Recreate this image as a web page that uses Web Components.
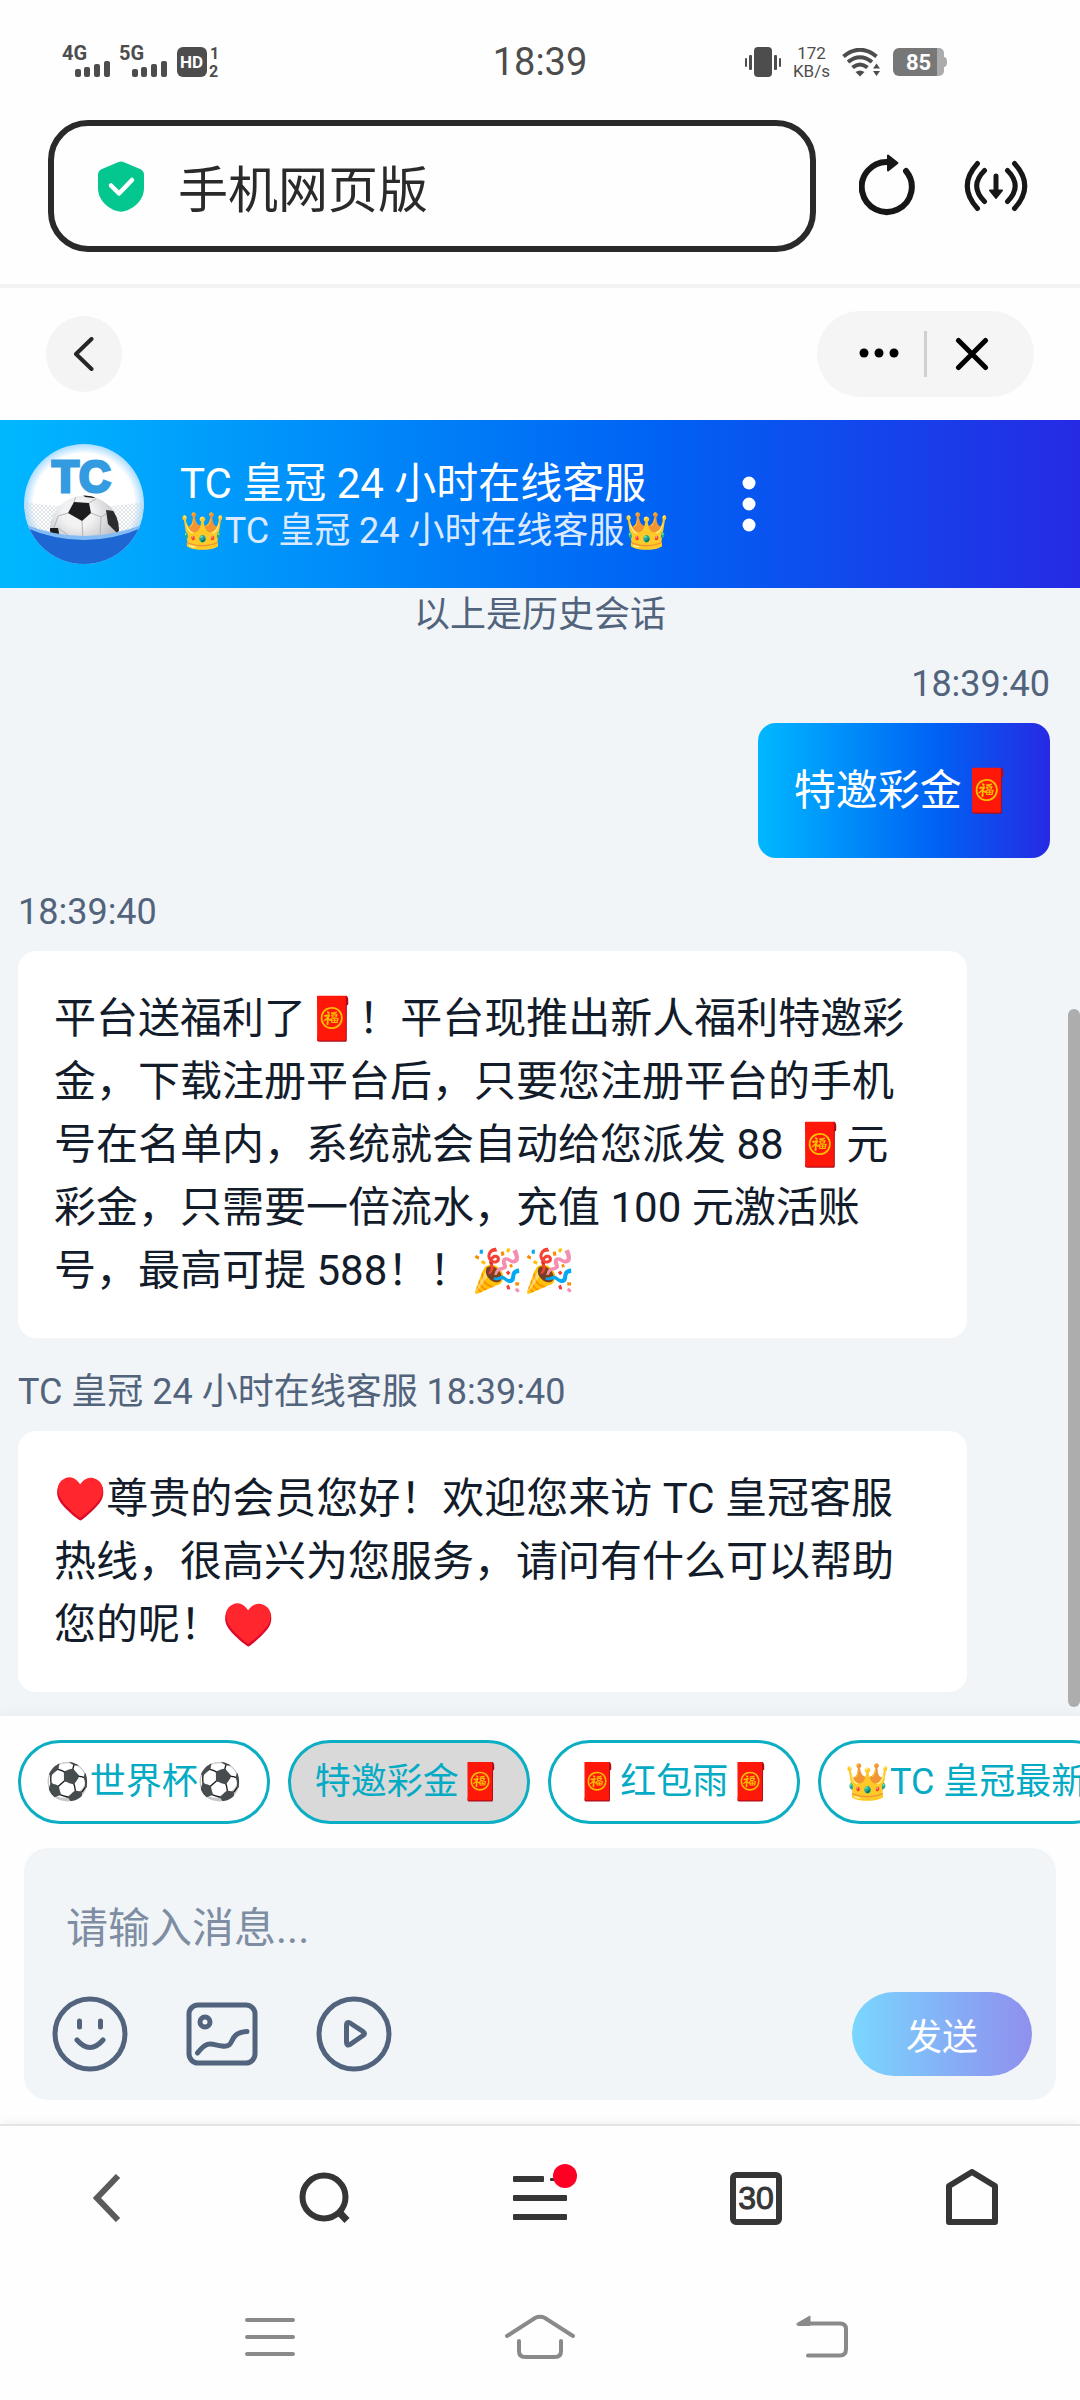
<!DOCTYPE html>
<html lang="zh-CN">
<head>
<meta charset="utf-8">
<meta name="viewport" content="width=device-width, initial-scale=1">
<title>TC 皇冠 24 小时在线客服</title>
<style>
  html { background: #fefefe; }
  body {
    margin: 0;
    font-family: Roboto, "Noto Sans CJK SC", "Noto Color Emoji", sans-serif;
    color: #131c2b;
    --brand: linear-gradient(90deg, #00b8ff 0%, #0062f4 61%, #262ae4 100%);
    --slate: #52637c;
    --panel: #f1f5f8;
  }
</style>
</head>
<body>
<chat-page>
  <status-bar></status-bar>
  <browser-bar></browser-bar>
  <site-toolbar></site-toolbar>
  <chat-header>
    <span slot="title">TC 皇冠 24 小时在线客服</span>
    <span slot="subtitle">👑TC 皇冠 24 小时在线客服👑</span>
  </chat-header>
  <chat-feed>
    <feed-note>以上是历史会话</feed-note>
    <chat-message own><span slot="meta">18:39:40</span>特邀彩金🧧</chat-message>
    <chat-message><span slot="meta">18:39:40</span>平台送福利了🧧！平台现推出新人福利特邀彩金，下载注册平台后，只要您注册平台的手机号在名单内，系统就会自动给您派发 88 🧧元彩金，只需要一倍流水，充值 100 元激活账号，最高可提 588！！🎉🎉</chat-message>
    <chat-message><span slot="meta">TC 皇冠 24 小时在线客服 18:39:40</span>♥️尊贵的会员您好！欢迎您来访 TC 皇冠客服热线，很高兴为您服务，请问有什么可以帮助您的呢！♥️</chat-message>
  </chat-feed>
  <chat-composer>
    <quick-reply slot="replies">⚽️世界杯⚽️</quick-reply>
    <quick-reply slot="replies" selected>特邀彩金🧧</quick-reply>
    <quick-reply slot="replies">🧧红包雨🧧</quick-reply>
    <quick-reply slot="replies">👑TC 皇冠最新</quick-reply>
  </chat-composer>
  <browser-nav></browser-nav>
  <system-nav></system-nav>
</chat-page>

<script>
const base = `
  *, *::before, *::after { box-sizing: border-box; }
  button { font: inherit; color: inherit; background: none; border: 0; padding: 0; margin: 0; display: flex; align-items: center; justify-content: center; }
  svg { display: block; flex: none; }
`;
function element(tag, css, html) {
  customElements.define(tag, class extends HTMLElement {
    constructor() {
      super();
      this.attachShadow({ mode: "open" }).innerHTML = `<style>${base}${css}</style>${html}`;
    }
  });
}

element("chat-page", `
  :host { display: flex; flex-direction: column; min-height: 100vh; overflow-x: hidden; }
`, `<slot></slot>`);

element("status-bar", `
  :host { display: grid; grid-template-columns: 1fr auto 1fr; align-items: center; padding: 40px 0 36px; color: #4d4d4d; }
  .side { display: flex; align-items: center; gap: 7px; }
  .left { padding-left: 62px; }
  .right { padding-right: 132px; justify-content: flex-end; gap: 12px; }
  time { font-size: 38px; line-height: 44px; }
  .rate { display: flex; flex-direction: column; align-items: center; font-size: 17px; line-height: 18px; }
  svg text { font-weight: 700; }
`, `
  <div class="side left">
    <svg width="50" height="44" viewBox="0 -6 50 44" fill="#4d4d4d"><text x="0" y="14" font-size="20">4G</text>
      <rect x="13" y="23" width="6" height="8" rx="2"/><rect x="22" y="21" width="6" height="10" rx="2"/><rect x="32" y="18" width="6" height="13" rx="2"/><rect x="42" y="15" width="6" height="16" rx="2"/></svg>
    <svg width="50" height="44" viewBox="0 -6 50 44" fill="#4d4d4d"><text x="0" y="14" font-size="20">5G</text>
      <rect x="13" y="23" width="6" height="8" rx="2"/><rect x="22" y="21" width="6" height="10" rx="2"/><rect x="32" y="18" width="6" height="13" rx="2"/><rect x="42" y="15" width="6" height="16" rx="2"/></svg>
    <svg width="48" height="44" viewBox="0 -6 48 44" fill="#4d4d4d"><rect x="1" y="1" width="30" height="30" rx="6"/>
      <text x="4" y="22" font-size="17" fill="#fff">HD</text>
      <text x="34" y="13" font-size="16">1</text><text x="33" y="31" font-size="16">2</text></svg>
  </div>
  <time>18:39</time>
  <div class="side right">
    <svg width="36" height="30" viewBox="0 0 36 30" fill="#4d4d4d"><rect x="9" width="18" height="30" rx="4"/>
      <rect x="0" y="11" width="2" height="9" rx="1"/><rect x="4" y="8" width="3" height="15" rx="1"/><rect x="29" y="8" width="3" height="15" rx="1"/><rect x="34" y="11" width="2" height="9" rx="1"/></svg>
    <div class="rate"><span>172</span><span>KB/s</span></div>
    <svg width="39" height="29" viewBox="0 0 39 29" fill="none" stroke="#4d4d4d" stroke-width="4">
      <path d="M1.500 8.500Q18 -5 34.500 8.500M6 14Q18 4.500 30 14M10.500 19.500Q18 13.500 25.500 19.500"/>
      <path d="M13.500 24Q18 21 22.500 24L18 28.500Z" fill="#4d4d4d" stroke="none"/>
      <path d="M31 20.500L34.500 15.500L38 20.500ZM31 23L34.500 28L38 23Z" fill="#4d4d4d" stroke="none"/></svg>
    <svg width="55" height="28" viewBox="0 0 55 28"><path d="M44 0h2a5 5 0 0 1 5 5v4q3 0 3 5t-3 5v4a5 5 0 0 1-5 5h-2Z" fill="#ababab"/><path d="M6 0H44V28H6a6 6 0 0 1-6-6V6a6 6 0 0 1 6-6Z" fill="#777"/>
      <text x="13" y="22" font-size="22" fill="#fff">85</text></svg>
  </div>
`);

element("browser-bar", `
  :host { display: flex; align-items: center; padding: 0 48px 32px; border-bottom: 4px solid #f3f3f3; }
  label { flex: 1; min-width: 0; display: flex; align-items: center; gap: 34px; border: 6px solid #2a2a2a; border-radius: 40px; padding: 24px 42px 24px 44px; }
  input { flex: 1; min-width: 0; border: 0; padding: 0; outline: 0; background: none; font-family: "Noto Sans CJK SC", sans-serif; font-size: 50px; line-height: 72px; height: 72px; color: #2a2a2a; }
  .reload { margin-left: 43px; }
  .save { margin-left: 47px; margin-right: 4px; }
`, `
  <label>
    <svg width="46" height="51" viewBox="0 0 46 51"><path d="M20 1.200Q23 -.4 26 1.200L42 8Q46 10 46 13.500V27C46 39 36 48 26 50.300Q23 51.200 20 50.300C10 48 0 39 0 27V13.500Q0 10 4 8Z" fill="#04c78f"/><path d="M13 24.500L21 32.500L34 19" fill="none" stroke="#fff" stroke-width="4.500" stroke-linecap="round" stroke-linejoin="round"/></svg>
    <input type="text" value="手机网页版" aria-label="网址">
  </label>
  <button class="reload" aria-label="刷新">
    <svg width="58" height="64" viewBox="0 1 58 64" fill="none" stroke="#171717" stroke-width="6" stroke-linecap="round"><path d="M47 18A25 25 0 1 1 29 9" /><path d="M29 2.500L38.500 10L29 17.500Z" fill="#171717" stroke-width="2" stroke-linejoin="round"/></svg>
  </button>
  <button class="save" aria-label="下载">
    <svg width="64" height="54" viewBox="0 0 64 54" fill="none" stroke="#171717" stroke-width="5" stroke-linecap="round"><path d="M13.500 4.500Q-7 27 13.500 49.500M20.500 11.500Q5 27 20.500 42.500M50.500 4.500Q71 27 50.500 49.500M43.500 11.500Q59 27 43.500 42.500M32 17V32"/><path d="M26 31.500H38L32 39Z" fill="#171717" stroke-width="2" stroke-linejoin="round"/></svg>
  </button>
`);

element("site-toolbar", `
  :host { display: flex; align-items: center; justify-content: space-between; padding: 23px 46px; }
  .back { width: 76px; height: 76px; border-radius: 50%; background: #f4f4f4; }
  .capsule { display: flex; align-items: center; height: 86px; padding: 0 17px; border-radius: 43px; background: #f5f5f5; }
  .capsule button { width: 90px; height: 86px; }
  .rule { width: 3px; height: 46px; background: #d0d0d0; }
`, `
  <button class="back" aria-label="返回"><svg width="22" height="34" viewBox="0 0 22 34" fill="none" stroke="#262626" stroke-width="4" stroke-linecap="round" stroke-linejoin="round"><path d="M18.500 2L3 17L18.500 32"/></svg></button>
  <div class="capsule">
    <button aria-label="更多"><svg width="40" height="12" viewBox="0 0 40 12"><circle cx="5" cy="5" r="4.500"/><circle cx="20" cy="5" r="4.500"/><circle cx="35" cy="5" r="4.500"/></svg></button>
    <span class="rule"></span>
    <button aria-label="关闭"><svg width="34" height="34" viewBox="0 0 34 34" stroke="#000" stroke-width="5" stroke-linecap="round"><path d="M3.500 3.500L30.500 30.500M30.500 3.500L3.500 30.500"/></svg></button>
  </div>
`);

element("chat-header", `
  :host { display: flex; align-items: center; padding: 24px; color: #fff; background: var(--brand); }
  .names { margin-left: 36px; padding-top: 4px; white-space: nowrap; }
  .title { font-size: 42px; line-height: 50px; }
  .subtitle { font-size: 36px; line-height: 44px; color: #dbe9ff; }
  button { width: 48px; height: 72px; margin-left: 56px; }
`, `
  <svg width="120" height="120" viewBox="0 0 120 120" role="img" aria-label="TC">
    <defs>
      <clipPath id="disc"><circle cx="60" cy="60" r="60"/></clipPath>
      <clipPath id="sphere"><circle cx="60.500" cy="86" r="34.500"/></clipPath>
      <radialGradient id="glow"><stop offset=".84" stop-color="#fff"/><stop offset="1" stop-color="#a9dcff"/></radialGradient>
      <radialGradient id="ball" cx=".4" cy=".3" r=".75"><stop offset=".3" stop-color="#f2f2f2"/><stop offset="1" stop-color="#a9abb0"/></radialGradient>
      <pattern id="net" width="4" height="4" patternUnits="userSpaceOnUse"><path d="M0 0L4 4M4 0L0 4" stroke="#c9d2da" stroke-width=".6"/></pattern>
    </defs>
    <g clip-path="url(#disc)">
      <rect width="120" height="120" fill="url(#glow)"/>
      <path d="M0 58Q60 68 120 58V92H0Z" fill="url(#net)"/>
      <text x="28" y="48" font-family="Liberation Sans, sans-serif" font-weight="700" font-size="44" fill="#359be0" stroke="#359be0" stroke-width="3">TC</text>
      <g clip-path="url(#sphere)">
        <rect x="26" y="51" width="70" height="60" fill="url(#ball)"/>
        <path d="M44 69L50 58L65 59L67 69L58 77Z" fill="#1d1d1f"/>
        <path d="M82 66L90 67L98 82L93 89L84 80Z" fill="#2c2c2f"/>
        <path d="M26 84L34 84L36 94L26 94Z" fill="#1d1d1f"/><path d="M58 50L74 51L70 54L61 53Z" fill="#1d1d1f"/>
        <path d="M44 69L34 72L30 84M50 58L52 52M65 59L72 55M67 69L77 73L82 70M77 73L76 94M58 77L59 96M34 84L44 91" fill="none" stroke="#b5b5b8"/>
      </g>
      <path d="M0 80Q60 104 120 80V120H0Z" fill="#83bcf4"/>
      <path d="M0 83Q60 109 120 83V120H0Z" fill="#1e66d2"/>
    </g>
  </svg>
  <div class="names"><div class="title"><slot name="title"></slot></div><div class="subtitle"><slot name="subtitle"></slot></div></div>
  <button aria-label="菜单"><svg width="14" height="56" viewBox="0 0 14 56" fill="#fff"><circle cx="7" cy="7" r="6.500"/><circle cx="7" cy="28" r="6.500"/><circle cx="7" cy="49" r="6.500"/></svg></button>
`);

element("chat-feed", `
  :host { display: block; position: relative; padding: 0 30px 24px 18px; background: var(--panel); }
  .thumb { position: absolute; right: 0; top: 421px; bottom: 9px; width: 12px; border-radius: 6px; background: #adadad; }
`, `<slot></slot><span class="thumb"></span>`);

element("feed-note", `
  :host { display: block; text-align: center; font-size: 36px; line-height: 54px; margin: 0 -12px -12px 0; color: var(--slate); }
`, `<slot></slot>`);

element("chat-message", `
  :host { display: flex; flex-direction: column; align-items: flex-start; padding-top: 27px; }
  :host([own]) { align-items: flex-end; }
  .meta { font-size: 36px; line-height: 54px; margin-bottom: 12px; color: var(--slate); }
  .bubble { max-width: 92%; padding: 36px 54px 36px 36px; border-radius: 18px; background: #fff; font-size: 42px; line-height: 63px; }
  :host([own]) .bubble { padding: 36px; color: #fff; background: var(--brand); }
`, `<div class="meta"><slot name="meta"></slot></div><div class="bubble"><slot></slot></div>`);

element("quick-reply", `
  :host { display: block; flex: none; }
  button { padding: 12px 24px; border: 3px solid #0baec2; border-radius: 42px; background: #fff; color: #05abc4; font-size: 36px; line-height: 54px; white-space: nowrap; }
  :host([selected]) button { background: #d9d9d9; }
`, `<button><slot></slot></button>`);

element("chat-composer", `
  :host { display: block; padding: 24px 0; background: #fefefe; position: relative; box-shadow: 0 0 18px rgba(0,0,0,.05); }
  .replies { display: flex; gap: 18px; padding: 0 0 0 18px; overflow: hidden; }
  .box { margin: 24px 24px 0; padding: 45px 24px 24px 42px; border-radius: 24px; background: var(--panel); }
  textarea { display: block; width: 100%; height: 72px; resize: none; border: 0; outline: 0; padding: 0; background: none; font: inherit; font-size: 42px; line-height: 72px; overflow: hidden; }
  textarea::placeholder { color: #7f8da3; }
  .tools { display: flex; align-items: center; gap: 54px; margin: 27px 0 0 -15px; }
  .tools button { width: 78px; height: 84px; }
  .tools .send { width: 180px; margin-left: auto; border-radius: 42px; background: linear-gradient(90deg, #79d7fe, #88a6f4 66%, #8f90ee); color: #fff; font-size: 36px; }
`, `
  <div class="replies"><slot name="replies"></slot></div>
  <div class="box">
    <textarea rows="1" placeholder="请输入消息..." aria-label="消息"></textarea>
    <div class="tools">
      <button aria-label="表情"><svg width="76" height="76" viewBox="0 0 76 76" fill="none" stroke="#51637d" stroke-width="5" stroke-linecap="round"><circle cx="38" cy="38" r="35"/><path d="M27.500 25V31M48.500 25V31M25 44Q38 59 51 44"/></svg></button>
      <button aria-label="图片"><svg width="72" height="64" viewBox="0 0 72 64" fill="none" stroke="#51637d" stroke-width="5" stroke-linecap="round"><rect x="3" y="3" width="66" height="58" rx="9"/><circle cx="19" cy="20" r="5"/><path d="M11.500 51C22 37 26 43 36 44C51 46 40 31 61 29.500"/></svg></button>
      <button aria-label="视频"><svg width="76" height="76" viewBox="0 0 76 76" fill="none" stroke="#51637d" stroke-width="5" stroke-linecap="round" stroke-linejoin="round"><circle cx="38" cy="38" r="35"/><path d="M30.500 29Q30.500 25.500 34 27L47 35.500Q50 37.500 47 39.500L34 48.500Q30.500 50 30.500 46.500Z"/></svg></button>
      <button class="send">发送</button>
    </div>
  </div>
`);

element("browser-nav", `
  :host { display: grid; grid-template-columns: repeat(5, 1fr); padding: 28px 0 32px; background: #fefefe; border-top: 2px solid #e4e4e4; position: relative; box-shadow: 0 -4px 8px rgba(0,0,0,.04); color: #363636; }
  button { height: 88px; position: relative; }
  .dot { position: absolute; top: 10px; left: 50%; margin-left: 13px; width: 24px; height: 24px; border-radius: 50%; background: #ff0024; }
  .tabs span { width: 52px; height: 53px; border: 6px solid #363636; border-radius: 6px; font: 32px/41px "Liberation Sans", sans-serif; -webkit-text-stroke: 1px #363636; display: flex; justify-content: center; }
`, `
  <button aria-label="后退"><svg width="30" height="48" viewBox="1 0 30 48" fill="none" stroke="#5a5a5a" stroke-width="6"><path d="M26 2L5 24L26 46"/></svg></button>
  <button aria-label="搜索"><svg width="54" height="54" viewBox="0 0 54 54" fill="none" stroke="#363636" stroke-width="6"><circle cx="27" cy="26" r="21.500"/><path d="M41 40L50 49.500" stroke-width="7"/></svg></button>
  <button aria-label="菜单"><svg width="54" height="48" viewBox="0 0 54 48" fill="#363636"><rect y="2" width="31" height="6" rx="1"/><rect x="37" y="4" width="5" height="3" rx="1"/><rect y="21" width="54" height="6" rx="1"/><rect y="40" width="54" height="6" rx="1"/></svg><i class="dot"></i></button>
  <button class="tabs" aria-label="标签页"><span>30</span></button>
  <button aria-label="主页"><svg width="54" height="58" viewBox="0 0 54 58" fill="none" stroke="#363636" stroke-width="6" stroke-linejoin="round"><path d="M4 17L27 3L50 17V53H4Z"/></svg></button>
`);

element("system-nav", `
  :host { display: flex; justify-content: center; align-items: flex-start; flex: 1; padding: 23px 0; background: #fefefe; position: relative; }
  button { width: 25%; height: 80px; }
`, `
  <button aria-label="最近任务"><svg width="50" height="42" viewBox="0 0 50 42" stroke="#8a8a8a" stroke-width="4" stroke-linecap="round"><path d="M2 4H48M2 21H48M2 38H48"/></svg></button>
  <button aria-label="桌面"><svg width="72" height="46" viewBox="0 0 72 46" fill="none" stroke="#8a8a8a" stroke-width="4" stroke-linecap="round"><path d="M3 22L31 4Q36 1.500 41 4L69 22M15 27V37Q15 43 21 43H51Q57 43 57 37V27"/></svg></button>
  <button aria-label="返回"><svg width="80" height="46" viewBox="0 0 80 46" fill="none" stroke="#8a8a8a" stroke-width="4" stroke-linecap="round"><path d="M31 9.500H70Q76 9.500 76 15V35Q76 41.500 70 41.500H38"/><path d="M27 9.500L40 2V11.500H28Z" fill="#8a8a8a" stroke-width="1"/></svg></button>
`);
</script>
</body>
</html>
